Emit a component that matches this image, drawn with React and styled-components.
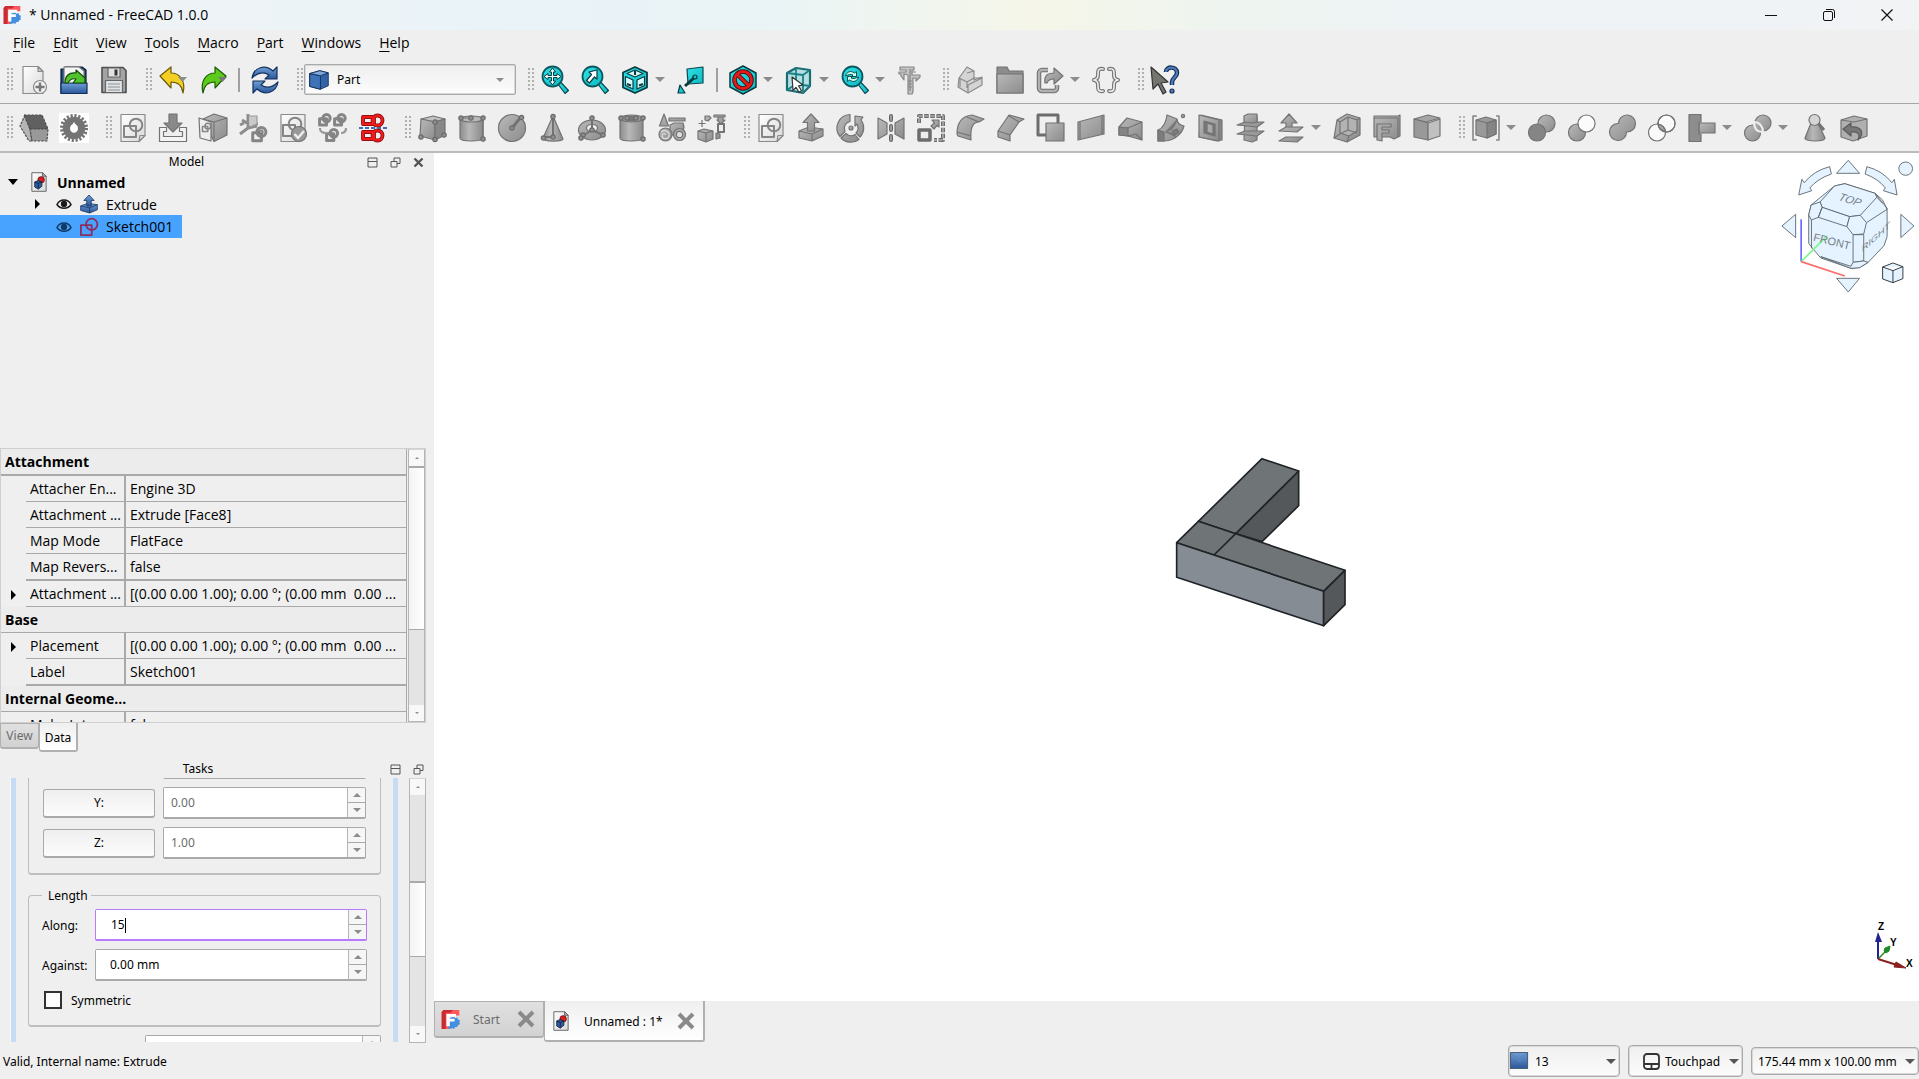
import React from 'react';
import styled, { createGlobalStyle, css } from 'styled-components';

const GlobalStyle = createGlobalStyle`
    * { box-sizing: border-box; }
    body {
        margin: 0;
        background: #efefef;
        color: #000;
        font-family: "Open Sans", "Noto Sans", sans-serif;
        font-size: 14px;
    }
    button, input, select {
        margin: 0;
        padding: 0;
        color: inherit;
        font-family: inherit;
        font-size: inherit;
    }
`;

const uiFont = css`
    font-family: "Noto Sans", "Open Sans", sans-serif;
    font-size: 12px;
`;

const Window = styled.div`
    display: flex;
    flex-direction: column;
    min-height: 100vh;
    overflow: hidden;
`;

const TitleBar = styled.header`
    display: flex;
    align-items: center;
    height: 30px;
    padding: 0 3px;
    background: linear-gradient(90deg, #f0f3f5 0%, #e9f3f8 28%, #eaf4f6 40%, #f5f6e9 54%, #eef4ef 64%, #eef3f6 75%, #f1f3f5 100%);
    h1 {
        flex: 1;
        margin: 0 0 2px 8px;
        font-size: 14px;
        font-weight: 400;
    }
`;

const CaptionButton = styled.button`
    display: flex;
    align-items: center;
    justify-content: center;
    width: 58px;
    height: 28px;
    border: 0;
    background: none;
`;

const MenuBar = styled.nav`
    display: flex;
    align-items: center;
    gap: 18px;
    height: 26px;
    padding-left: 13px;
`;

const MenuItem = styled.button`
    border: 0;
    background: none;
    line-height: 20px;
    u { text-underline-offset: 3px; }
`;

const ToolBar = styled.div`
    display: flex;
    align-items: center;
    height: ${({ $tall }) => ($tall ? 49 : 48)}px;
    border-bottom: ${({ $tall }) => ($tall ? 2 : 1)}px solid ${({ $tall }) => ($tall ? '#bcbcbc' : '#a6a6a6')};
`;

const Handle = styled.span`
    flex: none;
    width: ${({ $first }) => ($first ? 14 : 19)}px;
    height: 24px;
    background-image: repeating-linear-gradient(180deg, transparent 0 2px, #efefef 2px 4px), linear-gradient(90deg, #b0b0b0 0 2px, transparent 2px 4px, #b0b0b0 4px 6px);
    background-size: 6px 24px;
    background-position: right 1px top;
    background-repeat: no-repeat;
`;

const ToolButton = styled.button`
    display: flex;
    align-items: center;
    flex: none;
    gap: 6px;
    width: ${({ $menu }) => ($menu ? 56 : 40)}px;
    height: 40px;
    padding-left: 6px;
    border: 0;
    background: none;
`;

const Divider = styled.span`
    flex: none;
    width: 2px;
    height: 24px;
    margin: 0 5px;
    background: #a0a0a0;
`;

const Arrow = styled.span`
    flex: none;
    border: ${({ $size = 5 }) => $size}px solid transparent;
    border-bottom: 0;
    border-top-color: ${({ $color = '#8c8c8c' }) => $color};
`;

const Icon = styled.svg`
    flex: none;
    width: ${({ $size = 28 }) => $size}px;
    height: ${({ $size = 28 }) => $size}px;
    overflow: visible;
    fill: url(#metal);
    stroke: #737373;
    stroke-width: 1.2;
    stroke-linejoin: round;
`;

const Picker = styled.div`
    position: relative;
    display: flex;
    align-items: center;
    width: ${({ $width }) => $width}px;
    height: ${({ $height }) => $height}px;
    ${uiFont}
    select {
        width: 100%;
        height: 100%;
        padding-left: ${({ $indent }) => $indent}px;
        appearance: none;
        border: 1px solid #a9a9a9;
        border-radius: ${({ $round }) => ($round ? 4 : 2)}px;
        box-shadow: inset 0 0 0 1px #d8d8d8;
        background: linear-gradient(#efefef, #fcfcfc);
    }
    svg {
        position: absolute;
        left: ${({ $iconLeft = 5 }) => $iconLeft}px;
        pointer-events: none;
    }
    ${Arrow} {
        position: absolute;
        right: ${({ $arrowRight = 4 }) => $arrowRight}px;
        pointer-events: none;
    }
`;

const Main = styled.main`
    display: flex;
    flex: 1;
`;

const SidePanel = styled.aside`
    display: flex;
    flex-direction: column;
    flex: 0 0 434px;
`;

const DockTitle = styled.div`
    display: flex;
    align-items: center;
    flex: none;
    gap: 12px;
    height: ${({ $height }) => $height}px;
    padding: ${({ $drop = 0 }) => $drop}px 10px 0 18px;
    ${uiFont}
    h2 {
        flex: 1;
        margin: 0;
        font-size: 12px;
        font-weight: 400;
        line-height: 16px;
        text-align: center;
    }
    button {
        display: flex;
        border: 0;
        background: none;
    }
    svg {
        width: 11px;
        height: 11px;
        fill: none;
        stroke: #555;
    }
`;

const Tree = styled.ul`
    flex: 1;
    margin: 0;
    padding: 0;
    list-style: none;
`;

const TreeRow = styled.li`
    display: flex;
    align-items: center;
    width: fit-content;
    height: ${({ $selected }) => ($selected ? 23 : 22)}px;
    padding-left: ${({ $indent }) => $indent}px;
    padding-right: 9px;
    background: ${({ $selected }) => ($selected ? '#47a3ff' : 'transparent')};
    font-weight: ${({ $bold }) => ($bold ? 700 : 400)};
    span { margin-left: 8px; }
`;

const Twisty = styled.svg`
    width: 10px;
    height: 10px;
    margin-right: ${({ $gap = 0 }) => $gap}px;
    fill: #000;
`;

const Eye = styled.svg`
    width: 16px;
    height: 12px;
    margin-right: 8px;
    fill: none;
    stroke: ${({ $tint = '#1a1a1a' }) => $tint};
    stroke-width: 1.5;
    circle { fill: ${({ $tint = '#1a1a1a' }) => $tint}; }
`;

const PropertyPane = styled.section`
    display: flex;
    flex: 0 0 275px;
    width: 426px;
    border: 1px solid #cfcfcf;
    overflow: hidden;
`;

const PropertyTable = styled.table`
    display: block;
    flex: 1;
    height: 273px;
    border-right: 1px solid #a9a9a9;
    overflow: hidden;
    tbody { display: block; }
`;

const PropertyRow = styled.tr`
    display: grid;
    grid-template-columns: 25px 100px 1fr;
    align-items: center;
    height: ${({ $thick }) => ($thick ? 27 : 26)}px;
    line-height: 22px;
`;

const PropertyCell = styled.td`
    height: 100%;
    padding: 2px 0 0 ${({ $pad }) => $pad}px;
    border-right: ${({ $key }) => ($key ? '2px solid #a9a9a9' : '0')};
    border-bottom: ${({ $thick }) => ($thick ? 2 : 1)}px solid #a9a9a9;
    overflow: hidden;
    white-space: pre;
    text-overflow: ellipsis;
`;

const PropertyGroup = styled.th`
    grid-column: 1 / -1;
    height: 100%;
    padding: 2px 0 0 4px;
    border-bottom: ${({ $thick }) => ($thick ? 2 : 1)}px solid #a9a9a9;
    background: #ececec;
    text-align: left;
`;

const TwistyCell = styled.td`
    padding: 2px 0 0 8px;
`;

const ScrollTrack = styled.div`
    display: flex;
    flex-direction: column;
    flex: none;
    width: 17px;
    margin-left: ${({ $gap }) => $gap}px;
    border: 1px solid #b5b5b5;
    border-top-color: #d5d5d5;
    background: #e4e4e4;
`;

const ScrollStep = styled.button`
    display: flex;
    align-items: center;
    justify-content: center;
    flex: none;
    height: 16px;
    border: 0;
    background: #f8f8f8;
    ${Arrow} { transform: ${({ $up }) => ($up ? 'rotate(180deg)' : 'none')}; }
`;

const ScrollThumb = styled.div`
    flex: 0 0 ${({ $length }) => $length}px;
    margin-top: ${({ $before }) => $before}px;
    margin-bottom: auto;
    border: solid #a9a9a9;
    border-width: 2px 0 1px;
    background: linear-gradient(90deg, #f4f4f4, #fff);
`;

const Tabs = styled.div`
    display: flex;
    align-items: flex-start;
    flex: none;
    height: ${({ $height }) => $height}px;
    ${uiFont}
`;

const Tab = styled.button`
    display: flex;
    align-items: center;
    justify-content: ${({ $wide }) => ($wide ? 'flex-start' : 'center')};
    width: ${({ $width }) => $width}px;
    height: ${({ $height }) => $height}px;
    padding: ${({ $wide }) => ($wide ? '0 8px 0 6px' : '0')};
    border: 1px solid #b0b0b0;
    border-width: ${({ $active }) => ($active ? '0 2px 2px 1px' : '1px 1px 2px')};
    border-radius: 0 0 3px 3px;
    background: ${({ $active }) => ($active ? 'linear-gradient(#efefef, #fff)' : 'linear-gradient(#e0e0e0, #d2d2d2)')};
    color: ${({ $active }) => ($active ? '#000' : '#6c6c6c')};
    span {
        flex: ${({ $wide }) => ($wide ? 1 : 'none')};
        margin-left: ${({ $wide }) => ($wide ? 13 : 0)}px;
        padding-top: ${({ $active }) => ($active ? 2 : 0)}px;
        text-align: left;
    }
`;

const TaskPane = styled.section`
    display: flex;
    flex: 0 0 265px;
    height: 265px;
    width: 426px;
    overflow: hidden;
    ${uiFont}
`;

const TaskFrame = styled.form`
    flex: 1;
    height: 264px;
    margin: 0 0 0 11px;
    padding: 0 12px;
    border: solid #c6dcf4;
    border-width: 0 5px;
    box-shadow: -1px 0 #f8f8f8;
    overflow: hidden;
`;

const DirectionBox = styled.div`
    display: flex;
    flex-direction: column;
    gap: 8px;
    margin-top: -38px;
    padding: 6px 14px 14px;
    border: 1px solid #bdbdbd;
    border-bottom-width: 2px;
    border-radius: 4px;
`;

const LengthBox = styled.fieldset`
    display: flex;
    flex-direction: column;
    gap: 8px;
    min-width: 0;
    margin: 12px 0 0;
    padding: 5px 13px 14px;
    border: 1px solid #bdbdbd;
    border-bottom-width: 2px;
    border-radius: 4px;
    legend {
        padding: 0 3px 0 6px;
        line-height: 17px;
    }
`;

const FormRow = styled.div`
    display: grid;
    grid-template-columns: ${({ $label }) => $label}px 1fr;
    align-items: center;
    gap: ${({ $gap }) => $gap}px;
    height: 32px;
`;

const PushButton = styled.button`
    height: 29px;
    border: 1px solid #a9a9a9;
    border-bottom-width: 2px;
    border-radius: 3px;
    background: linear-gradient(#efefef, #fcfcfc);
`;

const SpinBox = styled.div`
    position: relative;
    display: grid;
    grid-template-columns: 1fr 18px;
    height: 32px;
    border: 1px solid ${({ $focus }) => ($focus ? '#b57bfa' : '#a9a9a9')};
    border-bottom-width: 2px;
    border-radius: 2px;
    background: #fff;
    overflow: hidden;
    input {
        min-width: 0;
        padding-left: ${({ $pad }) => $pad}px;
        border: 0;
        outline: 0;
        background: #fff;
        color: ${({ $dim }) => ($dim ? '#6c6c6c' : '#000')};
    }
`;

const SpinSteps = styled.div`
    display: grid;
    grid-template-rows: 1fr 1fr;
    border-left: 1px solid #b5b5b5;
    button {
        display: flex;
        align-items: center;
        justify-content: center;
        border: 0;
        background: #f6f6f6;
    }
    button:first-child { border-bottom: 1px solid #a9a9a9; }
    button:first-child ${Arrow} { transform: rotate(180deg); }
`;

const Caret = styled.span`
    position: absolute;
    top: 8px;
    left: 29px;
    width: 1px;
    height: 15px;
    background: #000;
`;

const CheckRow = styled.label`
    display: flex;
    align-items: center;
    gap: 9px;
    height: 22px;
    padding-left: 2px;
    input {
        width: 18px;
        height: 18px;
        appearance: none;
        border: 2px solid #333;
        background: #fff;
    }
`;

const ModeRow = styled.div`
    margin: 8px 0 0 117px;
`;

const Workspace = styled.section`
    display: flex;
    flex-direction: column;
    flex: 1;
    min-width: 0;
`;

const Viewport = styled.div`
    position: relative;
    flex: 1;
    background: #fff;
`;

const Solid = styled.svg`
    position: absolute;
    top: calc(50% - 137px);
    left: calc(50% - 27px);
    width: 220px;
    height: 200px;
    stroke: #202427;
    stroke-width: 5;
    stroke-linejoin: round;
`;

const NavCube = styled.svg`
    position: absolute;
    top: 3px;
    right: 0;
    width: 140px;
    height: 140px;
    fill: #e4f3ff;
    stroke: #59636b;
    stroke-width: 2.6;
    stroke-linejoin: round;
    text {
        fill: #747e86;
        stroke: none;
        font-family: "Liberation Sans", sans-serif;
        font-size: 11px;
        text-anchor: middle;
    }
`;

const SideLabel = styled.text`
    && { font-size: 9px; }
`;

const AxisCross = styled.svg`
    position: absolute;
    right: 0;
    bottom: 26px;
    width: 59px;
    height: 60px;
    text {
        font-family: "Liberation Sans", sans-serif;
        font-size: 10px;
        font-weight: 700;
    }
`;

const StatusBar = styled.footer`
    display: flex;
    align-items: center;
    gap: 8px;
    height: 36px;
    padding-left: 3px;
    ${uiFont}
    p {
        flex: 1;
        margin: 0;
    }
`;

const Defs = () => (
    <svg width="0" height="0" display="block" aria-hidden="true">
        <defs>
            <linearGradient id="metal" x1="0" y1="0" x2="1" y2="1">
                <stop offset="0" stopColor="#b9b9b9" />
                <stop offset="1" stopColor="#8c8c8c" />
            </linearGradient>
            <linearGradient id="tube" x1="0" x2="1">
                <stop offset="0" stopColor="#8d8d8d" />
                <stop offset=".4" stopColor="#b8b8b8" />
                <stop offset="1" stopColor="#8a8a8a" />
            </linearGradient>
            <linearGradient id="paper" x1="0" y1="0" x2="1" y2="1">
                <stop offset="0" stopColor="#fff" />
                <stop offset="1" stopColor="#d9d9d9" />
            </linearGradient>
            <linearGradient id="blue" x1="0" y1="0" x2="0" y2="1">
                <stop offset="0" stopColor="#6f9fd6" />
                <stop offset="1" stopColor="#2b569a" />
            </linearGradient>
            <linearGradient id="cyan" x1="0" y1="0" x2="1" y2="1">
                <stop offset="0" stopColor="#2fe3e8" />
                <stop offset="1" stopColor="#0fb9c4" />
            </linearGradient>
        </defs>
    </svg>
);

const SketchMark = ({ x = 0, y = 0, s = 1, color = '#858585', w = 2 }) => (
    <g transform={`translate(${x} ${y}) scale(${s})`} fill="none" stroke={color} strokeWidth={w / s}>
        <rect x="1" y="8" width="12" height="11" />
        <circle cx="13" cy="7" r="6.3" />
    </g>
);

const Page = () => (
    <>
        <path d="M2 .5h24v21l-6 6H2z" fill="url(#paper)" stroke="#8a8a8a" />
        <path d="M20 27.500l1-6 5 0z" fill="#ddd" stroke="#8a8a8a" />
    </>
);

const Dot = ({ at }) => at.map(([x, y]) => <circle key={`${x}-${y}`} cx={x} cy={y} r="2.200" fill="#8f8f8f" stroke="#6b6b6b" />);

const Lens = () => (
    <>
        <path d="M16.500 17.500l7.500 10 3.500-3-8-8.500z" fill="url(#cyan)" stroke="#0c4a50" />
        <circle cx="11.500" cy="10.500" r="10" fill="url(#cyan)" stroke="#0c5a60" strokeWidth="1.800" />
    </>
);

const glyphs = {
    newDoc: (
        <>
            <path d="M3 .5h15l5 5v22H3z" fill="url(#paper)" stroke="#8a8a8a" />
            <path d="M18 .5v5h5z" fill="#ccc" stroke="#8a8a8a" />
            <circle cx="20" cy="21" r="6.500" fill="#f2f2f2" stroke="#8a8a8a" />
            <path d="M20 16.500v9M15.500 21h9" stroke="#777" strokeWidth="2.400" />
        </>
    ),
    open: (
        <>
            <path d="M1 3h4v-2h17l4 3v23H1z" fill="#1d4b80" stroke="#0b1c33" />
            <path d="M4 1h15l5 4v13H4z" fill="#f4f4f4" stroke="#777" />
            <path d="M1 17h26v10.500H1z" fill="url(#blue)" stroke="#0f2d55" />
            <path d="M5 17C5 10 9 6 16 7V4l9 8v5H13l3-4c-4-1-6 0-8 4z" fill="#4fc42c" stroke="#164a08" />
        </>
    ),
    save: (
        <>
            <path d="M2 1.500h21l3 3v22H2z" fill="#a3a3a3" stroke="#4e4e4e" strokeWidth="1.600" />
            <path d="M8 2h12v9H8z" fill="#e2e2e2" stroke="#666" />
            <path d="M14.500 3.500h3v6h-3z" fill="#333" stroke="none" />
            <path d="M5.500 14.500h17v12h-17z" fill="#dfe3e6" stroke="#666" />
            <path d="M8 18h12M8 21h12M8 24h12" stroke="#8a8f94" />
        </>
    ),
    undo: (
        <>
            <path d="M1 10L12 1v6c9 0 15 8 12 20-1-8-5-11-12-11v6z" fill="#f2cf22" stroke="#6b5a08" />
            <path d="M19 11h9l-4.500 5z" fill="#8c8c8c" stroke="none" />
        </>
    ),
    redo: (
        <>
            <path d="M27 10L16 1v6C7 7 1 15 4 27c1-8 5-11 12-11v6z" fill="#5ccb1c" stroke="#1d5c07" />
            <path d="M19 11h9l-4.500 5z" fill="#777" stroke="none" />
        </>
    ),
    refresh: (
        <g fill="url(#blue)" stroke="#12315e">
            <path d="M1 12C3 1 14-2 22 5l4-4v12H14l4-4C12 5 6 7 1 12z" />
            <path d="M27 16c-2 11-13 14-21 7l-4 4V15h12l-4 4c6 4 12 2 17-3z" />
        </g>
    ),
    fitAll: (
        <>
            <Lens />
            <path d="M11.500 2l3 4h-2v3.500h3.500v-2l4 3-4 3v-2h-3.500V15h2l-3 4-3-4h2v-3.500H7v2l-4-3 4-3v2h3.500V6h-2z" fill="#e8ffff" stroke="#0b3b40" strokeWidth="1" />
        </>
    ),
    fitSel: (
        <>
            <Lens />
            <path d="M16 4v9l-2.500-2-5 6-3-2.500 5-6L8 6z" fill="#fff" stroke="#0b3b40" />
        </>
    ),
    iso: (
        <>
            <path d="M14 1l12 5.500v15L14 27 2 21.500v-15z" fill="url(#cyan)" stroke="#0b3b40" strokeWidth="1.800" />
            <path d="M14 4l8 3.500-8 3.500-8-3.500zM4.500 10.500l7.500 3.500v9l-7.500-3.500zM23.500 10.500L16 14v9l7.500-3.500z" fill="#d9fbfc" stroke="#0b3b40" />
            <path d="M14 5v4M6 18l4 1.500M22 18l-4 1.500" stroke="#0b3b40" strokeWidth="2" />
        </>
    ),
    align: (
        <>
            <path d="M10 3l16-2v16l-15 1z" fill="url(#cyan)" stroke="#0c4a50" />
            <path d="M18 11L8 20" stroke="#0b3b40" strokeWidth="3" />
            <path d="M8 27l-7 0 2-8z" fill="#15c7d0" stroke="#0b3b40" />
            <circle cx="18" cy="11" r="2" fill="#15c7d0" stroke="#0b3b40" />
        </>
    ),
    drawStyle: (
        <>
            <path d="M14 0l13 7v14l-13 7-13-7V7z" fill="url(#cyan)" stroke="#0b3b40" strokeWidth="1.500" />
            <circle cx="14" cy="14" r="8.500" fill="none" stroke="#3d0606" strokeWidth="4.500" />
            <path d="M8 8l12 12" stroke="#3d0606" strokeWidth="4.500" />
            <circle cx="14" cy="14" r="8.500" fill="none" stroke="#e01b1b" strokeWidth="3" />
            <path d="M8 8l12 12" stroke="#e01b1b" strokeWidth="3" />
        </>
    ),
    selMode: (
        <>
            <path d="M2 7l9-5 14 2v16l-7 7L2 24z" fill="#b5dfe1" stroke="#1b6d73" strokeWidth="2.200" />
            <path d="M2 7l16 2 7-5M18 9v18M11 2v16l-9 6M11 18l14 2" fill="none" stroke="#1b8188" strokeWidth="1.800" />
            <path d="M7 11l11 8-4.500.8 3 5-2.500 1.500-3-5-3 3z" fill="#fff" stroke="#333" />
        </>
    ),
    zoom: (
        <>
            <Lens />
            <path d="M4.500 10c1-4 5-6 9-3l2-1.500v5h-5l1.500-1.500c-2-1.500-5 0-7.500 1zM17.500 11c-1 4-5 6-9 3l-2 1.500v-5h5L10 12c2 1.500 5 0 7.500-1z" fill="#cfe" stroke="#0b3b40" strokeWidth=".9" />
        </>
    ),
    caliper: (
        <g fill="#c4c4c4" stroke="#858585">
            <path d="M3 1l14 0v3h-2v5h8v2l-4 4v-3h-3v14l-1 2h-4V9L7 8v6l-3-4V8H2V6h7V4H3z" />
            <path d="M13 3v22M15 6h4M15 15h-4M15 18h-4M15 21h-4" fill="none" />
        </g>
    ),
    part: (
        <g fill="#d4d4d4" stroke="#8a8a8a">
            <path d="M3 12l8-11 7 4v9l8-3v8L12 27 2 21z" />
            <path d="M3 12l8 4v6M11 16l7-4 7 0M12 19v8M12 19l14-7M11 7l7-2M4 13v8" fill="none" />
        </g>
    ),
    folder: (
        <>
            <path d="M1 1h10l2 4h14v22H1z" fill="#8d8d8d" />
            <path d="M1 8h26v19H1z" />
        </>
    ),
    link: (
        <>
            <path d="M12 4H6a3 3 0 0 0-3 3v15a3 3 0 0 0 3 3h12a3 3 0 0 0 3-3v-3" fill="none" stroke="#6f6f6f" strokeWidth="4.500" />
            <path d="M12 4H6a3 3 0 0 0-3 3v15a3 3 0 0 0 3 3h12a3 3 0 0 0 3-3v-3" fill="none" stroke="#b0b0b0" strokeWidth="2.400" />
            <path d="M9 17c-1-7 2-10 9-10V2l9 8-9 8v-5c-4 0-6 1-7 4z" />
        </>
    ),
    braces: (
        <g fill="none" strokeLinecap="round">
            <path d="M11 3C6 2 6 5 6 8s0 5-4 6c4 1 4 3 4 6s0 6 5 5M17 3c5-1 5 2 5 5s0 5 4 6c-4 1-4 3-4 6s0 6-5 5" stroke="#777" strokeWidth="4" />
            <path d="M11 3C6 2 6 5 6 8s0 5-4 6c4 1 4 3 4 6s0 6 5 5M17 3c5-1 5 2 5 5s0 5 4 6c-4 1-4 3-4 6s0 6-5 5" stroke="#eee" strokeWidth="1.600" />
        </g>
    ),
    whatsThis: (
        <>
            <path d="M0 1l17 15-7 1 5 9-3 2-5-10-5 5z" fill="#75756f" stroke="#333" />
            <path d="M15 6c0-6 11-6 11 1 0 4-5 5-5 9v3" fill="none" stroke="#152c52" strokeWidth="4.500" />
            <path d="M15 6c0-6 11-6 11 1 0 4-5 5-5 9v3" fill="none" stroke="#4d7dbd" strokeWidth="2.200" />
            <circle cx="21" cy="25" r="2" fill="#4d7dbd" stroke="#152c52" />
        </>
    ),
    hexa: (
        <g strokeDasharray="2.500 1.200" stroke="#4f4f4f">
            <path d="M5 1L0 12l9 15h3L10 15z" fill="#b5b5b5" />
            <path d="M4 1h18l6 14H10z" fill="#606060" />
            <path d="M10 15h18l-1 12H12z" fill="#999" />
        </g>
    ),
    gear: (
        <>
            <path d="M-1-1h30v30H-1z" fill="#fff" stroke="none" />
            <circle cx="14" cy="14" r="12.300" fill="none" stroke="#747474" strokeWidth="3.400" strokeDasharray="2.200 1.664" />
            <circle cx="14" cy="14" r="7.500" fill="none" stroke="#747474" strokeWidth="7.500" />
            <path d="M14 8l2.500 4a3.800 3.800 0 1 1-5 0z" fill="#fff" stroke="none" />
        </>
    ),
    sketch: <><Page /><SketchMark x={4} y={4} /></>,
    editSketch: (
        <>
            <path d="M10 0h8v9h5l-9 9-9-9h5z" fill="#8a8a8a" />
            <path d="M.5 13.500h7v4h-3v5h19v-5h-3v-4h7v14H.5z" fill="#f4f4f4" />
        </>
    ),
    mapSketch: (
        <>
            <path d="M4 5l11-5 13 4v17l-13 6.500z" />
            <path d="M4 5l11 3 13-4M15 8v19" fill="none" />
            <path d="M0 4l12 4v19L1 24z" fill="#eee" />
            <SketchMark x={3} y={9} s={0.450} w={1.500} />
        </>
    ),
    reorient: (
        <>
            <path d="M9 0v14M9 14l-8 6M9 14l9-2M3 6l5 3M1 11l4-2M13 10h6" fill="none" stroke="#8d8d8d" strokeWidth="3" />
            <path d="M10 2l8 0 0 8-7 3" fill="#c9c9c9" stroke="#999" />
            <SketchMark x={13} y={13} s={0.720} w={3} />
            <circle cx="22" cy="18" r="2" />
        </>
    ),
    validate: (
        <>
            <Page />
            <SketchMark x={3} y={3} />
            <circle cx="20" cy="20" r="7.500" fill="#999" />
            <path d="M15.500 20l3.500 4 6-7" fill="none" stroke="#eee" strokeWidth="2.500" />
        </>
    ),
    merge: (
        <>
            <SketchMark x={0} y={0} s={0.580} w={3} />
            <SketchMark x={15} y={0} s={0.580} w={3} />
            <SketchMark x={7} y={15} s={0.600} w={3} />
            <path d="M1 14c0 4 2 5 6 5M27 14c0 4-2 5-5 5" fill="none" stroke="#999" strokeWidth="2.200" />
        </>
    ),
    mirrorSketch: (
        <g fill="none">
            <g stroke="#7d0808" strokeWidth="3.800">
                <rect x="4" y="3" width="11" height="7" /><circle cx="18.500" cy="6.500" r="5" />
                <rect x="4" y="18" width="11" height="7" /><circle cx="18.500" cy="21.500" r="5" />
            </g>
            <g stroke="#ee1c1c" strokeWidth="2.400">
                <rect x="4" y="3" width="11" height="7" /><circle cx="18.500" cy="6.500" r="5" />
                <rect x="4" y="18" width="11" height="7" /><circle cx="18.500" cy="21.500" r="5" />
            </g>
            <path d="M0 14h28" stroke="#3f6fb2" strokeWidth="2.200" strokeDasharray="4 2" />
        </g>
    ),
    box: (
        <>
            <path d="M3 5l12-3 12 3-10 3z" fill="#c2c2c2" />
            <path d="M3 5l14 3v18L2 22z" />
            <path d="M17 8l10-3v16l-10 5z" fill="#888" />
            <Dot at={[[17, 8], [3, 23], [17, 25.500], [26, 21]]} />
        </>
    ),
    cylinder: (
        <>
            <path d="M2 5v19c0 4 23 4 23 0V5z" fill="url(#tube)" />
            <ellipse cx="13.500" cy="5" rx="11.500" ry="3" fill="#b9b9b9" />
            <path d="M3 4h10M25 5v20" />
            <Dot at={[[3, 4], [13, 4], [25, 4], [25, 25]]} />
        </>
    ),
    sphere: (
        <>
            <circle cx="14" cy="14" r="13.500" />
            <path d="M14 14l9-11" strokeWidth="3" />
            <Dot at={[[14, 14], [23.500, 3.500]]} />
        </>
    ),
    cone: (
        <>
            <path d="M15 2L5 24c0 4 20 4 20 1z" fill="url(#tube)" />
            <path d="M15 2v21H5" fill="none" strokeWidth="2" />
            <Dot at={[[15, 2.500], [15, 23], [5.500, 24]]} />
        </>
    ),
    torus: (
        <>
            <ellipse cx="14" cy="16" rx="13.500" ry="10" />
            <ellipse cx="14" cy="14" rx="5.500" ry="3.500" fill="#efefef" />
            <path d="M14 4v12l-8 5M14 16l11 5" fill="none" strokeWidth="2" />
            <Dot at={[[14, 4], [14, 16], [5, 21], [3, 24], [25, 21]]} />
        </>
    ),
    tube: (
        <>
            <path d="M2 5v19c0 4 23 4 23 0V5z" fill="url(#tube)" />
            <ellipse cx="13.500" cy="4.500" rx="11.500" ry="3.500" fill="#999" />
            <ellipse cx="13.500" cy="4.500" rx="5" ry="2" fill="#777" />
            <Dot at={[[3, 4], [9, 4], [18, 4], [25, 4], [25, 25]]} />
        </>
    ),
    primitives: (
        <>
            <path d="M6 0l4.500 12h-9zM11 4h16v3H11z" />
            <path d="M12 11l4-2 9 0 1 4-2 8H12z" />
            <circle cx="7.500" cy="20.500" r="6.500" />
            <circle cx="21.500" cy="20.500" r="6" fill="#aaa" />
            <circle cx="21.500" cy="20.500" r="3.200" fill="#ddd" />
            <path d="M7 21c1-2-3-2-3 1s6 4 7 0-4-7-8-4" fill="none" stroke="#ddd" />
        </>
    ),
    builder: (
        <>
            <path d="M0 17l6-2 9 2v8l-7 3-8-3z" />
            <path d="M0 17l8 2 7-2M8 19v8" fill="none" />
            <path d="M20 10h6v8h-6z" fill="#eee" strokeWidth="2" />
            <path d="M16 1h11v2H16zM20 3h5v3h2l-4 4-4-4h1zM7 2l4 0 2 2-3 3-3-1zM18 19l4 1 0 4-4 1zM4 6v7M.5 9.500h7" />
        </>
    ),
    extrude: (
        <>
            <path d="M2 17l10-4 14 2v7l-11 5-13-3z" />
            <path d="M2 17l13 3 11-5M15 20v7" fill="none" />
            <path d="M14 0l8 8.500h-4.500V17h-7V8.500H6z" />
        </>
    ),
    revolve: (
        <>
            <path d="M13 .5v7a7 7 0 0 0-5 10l-5 5A13.500 13.500 0 0 1 13 .5zM4 24l5-4.500a7 7 0 0 0 9 1l4 5A13.500 13.500 0 0 1 4 24z" />
            <path d="M18 2l8 1-2 3a13 13 0 0 1-1 17l-4-4a8 8 0 0 0 1-9l-2 2z" />
            <circle cx="14" cy="14" r="2" />
        </>
    ),
    mirror: (
        <>
            <path d="M1 4l9 5v11l-9 5zM27 4l-9 5v11l9 5z" />
            <path d="M14 2v24" stroke="#666" strokeWidth="4" strokeDasharray="4 6" strokeLinecap="round" />
            <path d="M14 2v24" stroke="#9b9b9b" strokeWidth="2" strokeDasharray="4 6" strokeLinecap="round" />
        </>
    ),
    scale: (
        <>
            <path d="M2 9V2h24v24H17" fill="none" stroke="#6d6d6d" strokeWidth="4" strokeDasharray="4.500 1.600" />
            <path d="M2 9V2h24v24H17" fill="none" stroke="#9d9d9d" strokeWidth="2" strokeDasharray="4 2.100" strokeDashoffset="-.2" />
            <path d="M2 16h11v10H2z" fill="#eee" stroke="#6d6d6d" strokeWidth="3.500" />
            <path d="M22 6v7l-2-1.500-3 3.500-3-3 3.500-3L15 6z" />
        </>
    ),
    fillet: <path d="M0 20c0-12 5-18 15-19l12 4-5 3c-6 0-9 5-8 18l-13-4zM0 18l14 4M10 3l12 5" />,
    chamfer: <path d="M1 17L12 1l15 4-5 3-9 13v6L1 23zM1 17l12 4M12 2l10 6" />,
    faceWires: (
        <>
            <path d="M1 1h20v20H1z" fill="#efefef" stroke="#6d6d6d" strokeWidth="3" />
            <path d="M9 9h18v18H9z" />
        </>
    ),
    ruled: <path d="M1 8l26-7v19L1 26zM3 8v17M25 2v18" />,
    loft: (
        <>
            <path d="M2 13l8-9 15 4v18l-14-4-9-1z" />
            <path d="M2 13l9 1L25 8M11 22l8-2 6 6" fill="none" />
            <path d="M2 13l9 1v8l-9-1z" fill="#858585" />
        </>
    ),
    sweep: (
        <>
            <path d="M10 1l10 4c0 4 3 6 7 7-2 8-9 14-19 15H1V16c5-2 8-7 9-15z" />
            <path d="M1 16l6 2v9H1zM8 18c6 0 11 3 10 5M9 17c6 0 10-7 11-12M15 17l5-2 2 3-4 3z" fill="#7c7c7c" />
            <circle cx="26" cy="2" r="1.600" />
        </>
    ),
    section: (
        <>
            <path d="M4 1l21 5v20L20 27 2 23z" fill="#8a8a8a" />
            <path d="M2 1l20 5v21L2 23z" />
            <path d="M7 7l11 3v12L7 19z" fill="#777" />
            <path d="M10 9l6 2v9l-6-2z" fill="#aaa" />
        </>
    ),
    crossSections: (
        <>
            <path d="M8 2l12 0v24l-5 2-8-2z" />
            <path d="M0 11l8-3h19l-7 5zM0 20l8-3h19l-7 5z" fill="#999" />
            <path d="M7 2l4-2h9v8l-4 1-9-1z" />
        </>
    ),
    offset: (
        <>
            <path d="M12 0l8 9h-5v6H9V9H4z" />
            <path d="M2 17l7-4h17l-6 5zM2 27l7-4h17l-6 5z" />
        </>
    ),
    thickness: (
        <>
            <path d="M4 6L14 0l13 4v17L14 28 1 24z" />
            <path d="M7 8l8-5 9 3v11l-8 5-9-3z" fill="#b3b3b3" />
            <path d="M15 3v13l9 3M15 16l-8 4M4 6l3 2M1 24l6-4M24 6l3-2M14 28l2-6" fill="none" />
        </>
    ),
    projection: (
        <>
            <path d="M1 2h24l2-1v21l-6 3-4-2H1z" />
            <path d="M4 10h14v3H9v3h7v3H9v8l-5-1z" fill="#aaa" />
            <path d="M1 4h24v19" fill="none" />
        </>
    ),
    faceColor: (
        <>
            <path d="M1 5l14-4 12 3-14 4z" fill="#a5a5a5" />
            <path d="M1 5l14 4v17L1 23z" fill="#999" />
            <path d="M15 9l12-4v17l-12 4z" fill="#c0c0c0" />
        </>
    ),
    compound: (
        <>
            <path d="M4 3l0-1H1v24h3v-1M24 2h3v24h-3" fill="none" stroke="#888" strokeWidth="1.600" />
            <path d="M4 6l10-3 10 3v14l-9 4-11-3z" fill="#999" />
            <path d="M15 9l9-3v14l-9 4z" fill="#858585" />
            <path d="M4 6l11 3 9-3" fill="none" />
        </>
    ),
    boolean: <><circle cx="18.500" cy="9.500" r="8.500" /><circle cx="9" cy="18.500" r="8.500" fill="#858585" /></>,
    cut: <><circle cx="9" cy="18.500" r="8.500" /><circle cx="18.500" cy="9.500" r="8.500" fill="#fbfbfb" /></>,
    union: <path d="M10.500 9.500a8.500 8.500 0 1 1 8 8.500 8.500 8.500 0 1 1-8-8.500z" />,
    common: (
        <>
            <circle cx="18.500" cy="9.500" r="8.500" fill="#fafafa" />
            <circle cx="9" cy="18.500" r="8.500" fill="#fafafa" />
            <path d="M10.100 10.100a8.500 8.500 0 0 1 7.400 7.800 8.500 8.500 0 0 1-7.400-7.800z" />
            <circle cx="18.500" cy="9.500" r="8.500" fill="none" />
        </>
    ),
    join: <><path d="M11 9h16v10H11z" /><path d="M1 .5h12V8H11v12h2v7.500H1z" fill="#8d8d8d" /></>,
    split: (
        <>
            <circle cx="19" cy="9" r="8" /><circle cx="8.500" cy="19" r="8" />
            <path d="M10 8c5 0 9 4 9 10-6 0-9-4-9-10z" stroke="#eee" strokeWidth="2" />
        </>
    ),
    check: (
        <>
            <path d="M11 9h7l7 15c0 4-20 4-20 0z" fill="url(#tube)" />
            <path d="M18 9l6 7" strokeWidth="3" />
            <circle cx="14.500" cy="6" r="5.500" fill="#d5d5d5" />
        </>
    ),
    defeature: (
        <>
            <path d="M1 6l13-4 13 3v17l-14 5L1 23z" fill="#b0b0b0" />
            <path d="M1 6l13 2 13-3" fill="none" />
            <path d="M3 15l8-6v4c9-1 15 5 7 13 3-6-1-9-7-8v4z" fill="#777" stroke="#5a5a5a" />
        </>
    ),
};

const BlueBox = ({ size }) => (
    <Icon $size={size} viewBox="0 0 28 28">
        <g stroke="#0f2d55">
            <path d="M1 5l14-4 12 3v18l-11 5L1 23z" fill="#3263a6" />
            <path d="M1 5l15 3v19L1 23z" fill="#3e73b8" />
            <path d="M1 5l14-4 12 3-11 4z" fill="#7ea9dc" />
        </g>
    </Icon>
);

const Logo = ({ size }) => (
    <Icon $size={size} viewBox="0 0 28 28">
        <g stroke="none">
            <path d="M4 0h23v8H13v20H1V3z" fill="#ff585d" />
            <path d="M4 0h3v28H1V3z" fill="#c92b35" />
            <path d="M4 0h14l-4 4H1V3z" fill="#c92b35" />
            <path d="M11 12l8-2 2 2 3-1 1 3 3 1-1 3 1 3-3 1-1 3-3 0-2 3-2-1-6 1z" fill="#418fde" />
            <path d="M8 6h14v4H13v3h7v4h-7v7H8z" fill="#fff" />
        </g>
    </Icon>
);

const DocIcon = ({ size = 20 }) => (
    <Icon $size={size} viewBox="0 0 28 28">
        <path d="M4 1h15l5 5v21H4z" fill="url(#paper)" stroke="#555" />
        <path d="M19 1v5h5z" fill="#bbb" stroke="#555" />
        <circle cx="17" cy="11" r="4.500" fill="#d81e1e" stroke="#6b0b0b" />
        <path d="M8 14l5-2 5 2v6l-5 4-5-3z" fill="#2f5d9f" stroke="#0f2342" />
        <path d="M8 14l5 2 5-2M13 16v7" fill="none" stroke="#0f2342" />
    </Icon>
);

const Cross = ({ size = 18 }) => (
    <Icon $size={size} viewBox="0 0 18 18">
        <path d="M2 2l14 14M16 2L2 16" stroke="#8a8a8a" strokeWidth="4" />
    </Icon>
);

const Tools = ({ items }) => items.map((item) => {
    const [name, menu] = item.split('+');
    return name === '|' ? <Divider key={item} /> : (
        <ToolButton key={item} $menu={menu !== undefined} aria-label={name}>
            <Icon viewBox="0 0 28 28">{glyphs[name]}</Icon>
            {menu !== undefined && <Arrow />}
        </ToolButton>
    );
});

const Scroll = ({ before, length, gap }) => (
    <ScrollTrack $gap={gap}>
        <ScrollStep type="button" $up aria-label="Scroll up"><Arrow $size={2} /></ScrollStep>
        <ScrollThumb $before={before} $length={length} />
        <ScrollStep type="button" aria-label="Scroll down"><Arrow $size={2} /></ScrollStep>
    </ScrollTrack>
);

const Spin = ({ id, label, value, pad = 7, dim, focus }) => (
    <SpinBox $pad={pad} $dim={dim} $focus={focus}>
        <input id={id} aria-label={label} defaultValue={value} />
        <SpinSteps>
            <button type="button" aria-label="Increase"><Arrow $size={4} /></button>
            <button type="button" aria-label="Decrease"><Arrow $size={4} /></button>
        </SpinSteps>
        {focus && <Caret />}
    </SpinBox>
);

const DockIcons = ({ close }) => (
    <>
        <button aria-label="Collapse"><svg viewBox="0 0 11 11"><path d="M1 1h9v9H1zM1 4.500h9" /></svg></button>
        <button aria-label="Float"><svg viewBox="0 0 11 11"><path d="M1 4.500h6v5.500H1zM4 4V1h6v5.500H7" /></svg></button>
        {close && <button aria-label="Close"><svg viewBox="0 0 11 11"><path d="M1.500 1.500l8 8M9.500 1.500l-8 8" strokeWidth="2.400" /></svg></button>}
    </>
);

const menus = ['File', 'Edit', 'View', 'Tools', 'Macro', 'Part', 'Windows', 'Help'];

const placement = '[(0.00 0.00 1.00); 0.00 °; (0.00 mm  0.00 ...';
const properties = [
    { group: 'Attachment', thick: true },
    { name: 'Attacher En...', value: 'Engine 3D' },
    { name: 'Attachment ...', value: 'Extrude [Face8]' },
    { name: 'Map Mode', value: 'FlatFace' },
    { name: 'Map Revers...', value: 'false', thick: true },
    { name: 'Attachment ...', value: placement, open: true },
    { group: 'Base' },
    { name: 'Placement', value: placement, open: true },
    { name: 'Label', value: 'Sketch001', thick: true },
    { group: 'Internal Geome...' },
    { name: 'Make Inter...', value: 'false' },
];

const EyeIcon = ({ tint }) => (
    <Eye viewBox="0 0 16 12" $tint={tint}>
        <path d="M1 6.500c3-6 11-6 14 0-3 5-11 5-14 0z" />
        <circle cx="8" cy="6" r="2.400" />
    </Eye>
);

export default function App() {
    return (
        <Window>
            <GlobalStyle />
            <Defs />
            <TitleBar>
                <Logo size={18} />
                <h1>* Unnamed - FreeCAD 1.0.0</h1>
                <CaptionButton aria-label="Minimize"><svg width="12" height="12"><path d="M0 6.500h12" stroke="#111" /></svg></CaptionButton>
                <CaptionButton aria-label="Restore">
                    <svg width="12" height="12" fill="none" stroke="#111">
                        <rect x=".5" y="2.500" width="9" height="9" rx="1.500" />
                        <path d="M3 .5h6.500a2 2 0 0 1 2 2V9" />
                    </svg>
                </CaptionButton>
                <CaptionButton aria-label="Close"><svg width="12" height="12"><path d="M.5.5l11 11M11.500.5l-11 11" stroke="#111" strokeWidth="1.200" /></svg></CaptionButton>
            </TitleBar>
            <MenuBar>
                {menus.map((name) => <MenuItem key={name}><u>{name[0]}</u>{name.slice(1)}</MenuItem>)}
            </MenuBar>
            <ToolBar>
                <Handle $first />
                <Tools items={['newDoc', 'open', 'save']} />
                <Handle />
                <Tools items={['undo', 'redo', '|', 'refresh']} />
                <Handle />
                <Picker $width={212} $height={31} $indent={32} $arrowRight={12}>
                    <select aria-label="Workbench" defaultValue="Part"><option>Part</option></select>
                    <BlueBox size={20} />
                    <Arrow $size={4} />
                </Picker>
                <Handle />
                <Tools items={['fitAll', 'fitSel', 'iso+', 'align', '|', 'drawStyle+', 'selMode+', 'zoom+', 'caliper']} />
                <Handle />
                <Tools items={['part', 'folder', 'link+', 'braces']} />
                <Handle />
                <Tools items={['whatsThis']} />
            </ToolBar>
            <ToolBar $tall>
                <Handle $first />
                <Tools items={['hexa', 'gear']} />
                <Handle />
                <Tools items={['sketch', 'editSketch', 'mapSketch', 'reorient', 'validate', 'merge', 'mirrorSketch']} />
                <Handle />
                <Tools items={['box', 'cylinder', 'sphere', 'cone', 'torus', 'tube', 'primitives', 'builder']} />
                <Handle />
                <Tools items={['sketch', 'extrude', 'revolve', 'mirror', 'scale', 'fillet', 'chamfer', 'faceWires', 'ruled', 'loft', 'sweep', 'section', 'crossSections', 'offset+', 'thickness', 'projection', 'faceColor']} />
                <Handle />
                <Tools items={['compound+', 'boolean', 'cut', 'union', 'common', 'join+', 'split+', 'check', 'defeature']} />
            </ToolBar>
            <Main>
                <SidePanel>
                    <DockTitle $height={18}>
                        <h2>Model</h2>
                        <DockIcons close />
                    </DockTitle>
                    <Tree>
                        <TreeRow $indent={8} $bold>
                            <Twisty viewBox="0 0 10 10" $gap={11}><path d="M0 2h10L5 8z" /></Twisty>
                            <DocIcon />
                            <span>Unnamed</span>
                        </TreeRow>
                        <TreeRow $indent={32}>
                            <Twisty viewBox="0 0 10 10" $gap={14}><path d="M3 0v10l5-5z" /></Twisty>
                            <EyeIcon />
                            <Icon $size={18} viewBox="0 0 28 28">
                                <g fill="url(#blue)" stroke="#12315e">
                                    <path d="M1 17l11-4 15 2v8l-12 5-14-4z" />
                                    <path d="M1 17l14 3 12-5M15 20v8" fill="none" />
                                    <path d="M14 0l8 8.500h-4.500V17h-7V8.500H6z" />
                                </g>
                            </Icon>
                            <span>Extrude</span>
                        </TreeRow>
                        <TreeRow $indent={56} $selected>
                            <EyeIcon tint="#103a63" />
                            <Icon $size={18} viewBox="0 0 20 20"><SketchMark color="#8c2f5e" w={2} /></Icon>
                            <span>Sketch001</span>
                        </TreeRow>
                    </Tree>
                    <PropertyPane>
                        <PropertyTable>
                            <tbody>
                                {properties.map(({ group, name, value, thick, open }, i) => (
                                    <PropertyRow key={i} $thick={thick}>
                                        {group ? <PropertyGroup $thick={thick}>{group}</PropertyGroup> : (
                                            <>
                                                <TwistyCell>{open && <Twisty viewBox="0 0 10 10"><path d="M2 0v10l5-5z" /></Twisty>}</TwistyCell>
                                                <PropertyCell $key $pad={4} $thick={thick}>{name}</PropertyCell>
                                                <PropertyCell $pad={4} $thick={thick}>{value}</PropertyCell>
                                            </>
                                        )}
                                    </PropertyRow>
                                ))}
                            </tbody>
                        </PropertyTable>
                        <Scroll gap={1} before={0} length={164} />
                    </PropertyPane>
                    <Tabs $height={29}>
                        <Tab $width={39} $height={26}>View</Tab>
                        <Tab $width={39} $height={29} $active><span>Data</span></Tab>
                    </Tabs>
                    <DockTitle $height={26} $drop={8}>
                        <h2>Tasks</h2>
                        <DockIcons />
                    </DockTitle>
                    <TaskPane>
                        <TaskFrame>
                            <DirectionBox>
                                <FormRow $label={112} $gap={8}><span /><Spin label="X" value="" dim /></FormRow>
                                <FormRow $label={112} $gap={8}><PushButton type="button">Y:</PushButton><Spin label="Y" value="0.00" dim /></FormRow>
                                <FormRow $label={112} $gap={8}><PushButton type="button">Z:</PushButton><Spin label="Z" value="1.00" dim /></FormRow>
                            </DirectionBox>
                            <LengthBox>
                                <legend>Length</legend>
                                <FormRow $label={53} $gap={0}>
                                    <label htmlFor="along">Along:</label>
                                    <Spin id="along" value="15" pad={15} focus />
                                </FormRow>
                                <FormRow $label={53} $gap={0}>
                                    <label htmlFor="against">Against:</label>
                                    <Spin id="against" value="0.00 mm" pad={14} />
                                </FormRow>
                                <CheckRow><input type="checkbox" />Symmetric</CheckRow>
                            </LengthBox>
                            <ModeRow><Spin label="Mode" value="" /></ModeRow>
                        </TaskFrame>
                        <Scroll gap={11} before={86} length={76} />
                    </TaskPane>
                </SidePanel>
                <Workspace>
                    <Viewport>
                        <Solid viewBox="0 0 660 600">
                            <path d="M446 93v104L336 305l-79-24z" fill="#54585a" />
                            <path d="M336 56l110 37-189 188-112-37z" fill="#6f7477" />
                            <path d="M145 244l440 147-64 63L80 308z" fill="#6f7477" />
                            <path d="M80 308l441 146v103L80 412z" fill="#858c94" />
                            <path d="M521 454l64-63v103l-64 63z" fill="#54585a" />
                            <path d="M257 281l-65 64" />
                        </Solid>
                        <NavCube viewBox="0 0 140 140">
                            <g transform="translate(-399 -56) scale(.3438 .3333)">
                                <path d="M1362 181l33 39h-67zM1328 535h67l-33 41zM1169 378l40-35v70zM1553 378l-38-35v70z" />
                                <circle cx="1529" cy="206" r="20" />
                                <path d="M1308 201l5 21q-40 14-63 42l6 8-38 13 9-47 7 10q28-36 74-48z" />
                                <path d="M1416 201l-5 21q38 14 59 42l-6 8 40 13-8-47-7 10q-28-36-73-48z" />
                                <path d="M1247 345l7-30 68-57 30-7 88 29 35 45v85l-9 27-46 50-25 16-25 2-88-31-24-29-11-15z" />
                                <path d="M1322 258l30-7 88 29 5 12-48 54-31 4-80-28-6-16z" />
                                <path d="M1254 315l26-9 6 16-11 30-20 8-8-15zM1286 322l80 28-8 30-83-28z" />
                                <path d="M1366 350l31-4 18 22-8 34-31 2-18-24z" />
                                <path d="M1255 360v85M1440 280l22 20 13 28-60 40M1445 292l17 18" fill="none" />
                                <path d="M1376 404h31v79l-31 4z" />
                                <path d="M1282 470l88 29 6-12 31-4 13 4-25 16-25 2z" />
                                <path d="M1462 501l30-12 29 11v36l-29 12-30-11zM1462 501l30 11 29-12M1492 512v36" stroke="#20262a" />
                                <g fill="none" strokeWidth="5">
                                    <path d="M1225 358v127" stroke="#6d6dfb" />
                                    <path d="M1225 485l73-75" stroke="#7df58b" />
                                    <path d="M1225 485l127 43" stroke="#fb6c6c" />
                                </g>
                            </g>
                            <text transform="translate(69 47) rotate(17) skewX(-18)">TOP</text>
                            <text transform="translate(52 89) rotate(14)">FRONT</text>
                            <SideLabel transform="translate(97 84) skewY(-42)">RIGHT</SideLabel>
                        </NavCube>
                        <AxisCross viewBox="0 0 59 60">
                            <path d="M18 44V25" stroke="#23238f" strokeWidth="2" />
                            <path d="M18 17l4 10h-7z" fill="#23238f" />
                            <path d="M18 44l9-9" stroke="#208a25" strokeWidth="1.500" />
                            <path d="M24 36l1-3 5-2-1 5-3 2z" fill="#208a25" stroke="#208a25" />
                            <path d="M18 44l19 6" stroke="#8b2020" strokeWidth="2" />
                            <path d="M36 47l10 6-12-1z" fill="#8b2020" stroke="#8b2020" />
                            <text x="18" y="15">Z</text>
                            <text x="30" y="31">Y</text>
                            <text x="46" y="52">X</text>
                        </AxisCross>
                    </Viewport>
                    <Tabs $height={42}>
                        <Tab $width={110} $height={37} $wide>
                            <Logo size={19} /><span>Start</span><Cross />
                        </Tab>
                        <Tab $width={161} $height={41} $wide $active>
                            <DocIcon /><span>Unnamed : 1*</span><Cross />
                        </Tab>
                    </Tabs>
                </Workspace>
            </Main>
            <StatusBar>
                <p>Valid, Internal name: Extrude</p>
                <Picker $width={112} $height={32} $indent={26} $iconLeft={2} $round>
                    <select aria-label="Notifications" defaultValue="13"><option>13</option></select>
                    <Icon $size={18} viewBox="0 0 18 18">
                        <path d="M.5.5h17v16H.5z" fill="url(#blue)" stroke="#4b5f7a" />
                        <path d="M1 1l8 8 8-8" fill="none" stroke="#5c86bd" />
                    </Icon>
                    <Arrow $color="#555" />
                </Picker>
                <Picker $width={115} $height={32} $indent={36} $iconLeft={15} $round>
                    <select aria-label="Navigation style" defaultValue="Touchpad"><option>Touchpad</option></select>
                    <Icon $size={17} viewBox="0 0 17 17">
                        <g fill="none" stroke="#333" strokeWidth="1.800"><rect x="1" y="1" width="15" height="15" rx="3" /><path d="M1 11h15M8.500 11v5" /></g>
                    </Icon>
                    <Arrow $color="#555" />
                </Picker>
                <Picker $width={168} $height={28} $indent={6} $round>
                    <select aria-label="Dimensions" defaultValue="175.44 mm x 100.00 mm"><option>175.44 mm x 100.00 mm</option></select>
                    <Arrow $color="#555" />
                </Picker>
            </StatusBar>
        </Window>
    );
}
